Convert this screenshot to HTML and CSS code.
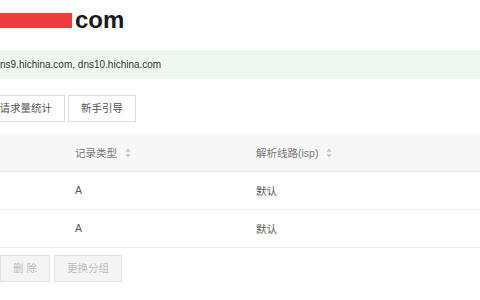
FILE: index.html
```html
<!DOCTYPE html>
<html>
<head>
  <meta charset="UTF-8">
  <title>域名解析</title>
  <link rel="stylesheet" href="styles.css">
</head>
<body>
<div class="page">
  <h1 class="title"><span class="mask"></span>com</h1>
  <div class="notice">ns9.hichina.com, dns10.hichina.com</div>
  <div class="toolbar">
    <a class="btn" href="javascript:;">请求量统计</a>
    <a class="btn" href="javascript:;">新手引导</a>
  </div>
  <table class="records">
    <thead>
      <tr>
        <th class="c1"></th>
        <th class="c2">记录类型<svg class="sort" width="6" height="10" viewBox="0 0 6 10"><path d="M3 0.5 L5.6 3.8 L0.4 3.8 Z M3 9.5 L5.6 6.2 L0.4 6.2 Z"/></svg></th>
        <th class="c3">解析线路(isp)<svg class="sort" width="6" height="10" viewBox="0 0 6 10"><path d="M3 0.5 L5.6 3.8 L0.4 3.8 Z M3 9.5 L5.6 6.2 L0.4 6.2 Z"/></svg></th>
      </tr>
    </thead>
    <tbody>
      <tr>
        <td class="c1"></td>
        <td class="c2">A</td>
        <td class="c3">默认</td>
      </tr>
      <tr>
        <td class="c1"></td>
        <td class="c2">A</td>
        <td class="c3">默认</td>
      </tr>
    </tbody>
  </table>
  <div class="footer">
    <a class="btn disabled" href="javascript:;">删 除</a>
    <a class="btn disabled" href="javascript:;">更换分组</a>
  </div>
</div>
</body>
</html>
```
FILE: styles.css
```css
* {
  margin: 0;
  padding: 0;
  box-sizing: border-box;
}
body {
  width: 480px;
  height: 300px;
  overflow: hidden;
  background: #fff;
  font-family: "Liberation Sans", "Noto Sans CJK SC", sans-serif;
  color: #555;
}
.title {
  height: 30px;
  margin-top: 5px;
  margin-bottom: 15px;
  line-height: 30px;
  font-size: 24px;
  font-weight: bold;
  color: #1a1a1a;
  white-space: nowrap;
}
.mask {
  display: inline-block;
  width: 72px;
  height: 15px;
  margin-right: 3px;
  background: #ee3b3d;
}
.notice {
  height: 29px;
  line-height: 29px;
  background: #edf9f0;
  font-size: 10px;
  color: #333;
  white-space: nowrap;
}
.toolbar {
  display: flex;
  gap: 3px;
  margin-top: 16px;
  margin-left: -13.5px;
}
.btn {
  display: block;
  height: 27px;
  line-height: 25px;
  padding: 0 12px;
  border: 1px solid #dcdcdc;
  background: #fff;
  font-size: 10.5px;
  color: #555;
  text-decoration: none;
  white-space: nowrap;
}
.btn.disabled {
  background: #f4f4f4;
  border-color: #e2e2e2;
  color: #bdbdbd;
}
.footer .btn {
  margin-right: 1px;
}
.records {
  width: 100%;
  margin-top: 12px;
  border-collapse: collapse;
  font-size: 10.5px;
}
.records th {
  height: 37px;
  padding: 0 0 0 12px;
  background: #f7f7f7;
  border-bottom: 1px solid #e6e6e6;
  text-align: left;
  font-weight: normal;
  color: #777;
  white-space: nowrap;
}
.records td {
  height: 38px;
  padding: 0 0 0 12px;
  border-bottom: 1px solid #ececec;
  color: #555;
}
.records .c1 {
  width: 63px;
}
.records .c2 {
  width: 181px;
}
.sort {
  margin-left: 8px;
  vertical-align: -1px;
  fill: #c4c4c4;
}
.footer {
  display: flex;
  gap: 3px;
  margin-top: 7px;
}
```
